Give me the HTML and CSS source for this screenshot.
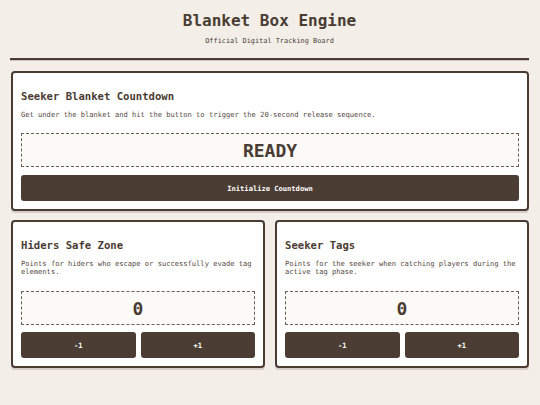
FILE: index.html
```html
<!DOCTYPE html>
<html lang="en">
<head>
    <meta charset="UTF-8">
    <meta name="viewport" content="width=device-width, initial-scale=1.0">
    <title>Blanket Box Engine</title>
    <link rel="stylesheet" href="styles.css">
</head>
<body>
    <div class="header">
        <h1>Blanket Box Engine</h1>
        <p class="subtitle">Official Digital Tracking Board</p>
    </div>

    <div class="card">
        <h2>Seeker Blanket Countdown</h2>
        <p class="desc">Get under the blanket and hit the button to trigger the 20-second release sequence.</p>
        <div class="display" id="timer">READY</div>
        <button class="btn" id="start-button">Initialize Countdown</button>
    </div>

    <div class="row">
        <div class="card">
            <h2>Hiders Safe Zone</h2>
            <p class="desc">Points for hiders who escape or successfully evade tag elements.</p>
            <div class="display" id="hiders">0</div>
            <div class="buttons">
                <button class="btn" onclick="changeScore('hiders', -1)">-1</button>
                <button class="btn" onclick="changeScore('hiders', 1)">+1</button>
            </div>
        </div>
        <div class="card">
            <h2>Seeker Tags</h2>
            <p class="desc">Points for the seeker when catching players during the active tag phase.</p>
            <div class="display" id="seeker">0</div>
            <div class="buttons">
                <button class="btn" onclick="changeScore('seeker', -1)">-1</button>
                <button class="btn" onclick="changeScore('seeker', 1)">+1</button>
            </div>
        </div>
    </div>

    <script>
        const scores = { hiders: 0, seeker: 0 };

        function changeScore(id, delta) {
            scores[id] = Math.max(0, scores[id] + delta);
            document.getElementById(id).textContent = scores[id];
        }

        let timerId = null;
        document.getElementById("start-button").onclick = () => {
            if (timerId) return;
            let left = 20;
            const box = document.getElementById("timer");
            box.textContent = left;
            timerId = setInterval(() => {
                left--;
                box.textContent = left > 0 ? left : "GO!";
                if (left <= 0) {
                    clearInterval(timerId);
                    timerId = null;
                }
            }, 1000);
        };
    </script>
</body>
</html>
```

FILE: styles.css
```css
html, body {
    margin: 0;
    font-family: "DejaVu Sans Mono", monospace;
    color: #4a3c33;
}

body {
    background-color: #f3eee8;
    padding: 11px 11px 10px 11px;
}

.header {
    text-align: center;
    padding-bottom: 12px;
    border-bottom: 2px solid #4a3c33;
    box-shadow: 0 1px 0 #c9c0b8;
    margin: 0 0 11px -1px;
}

.header h1 {
    margin: 0;
    font-size: 16px;
    line-height: 19px;
}

.subtitle {
    margin: 7px 0 0 0;
    font-size: 6.9px;
    line-height: 9px;
}

.card {
    background: white;
    border: 2px solid #4a3c33;
    border-radius: 4px;
    padding: 8px;
    box-shadow: 0 2px 0 #d6cec6;
    display: flex;
    flex-direction: column;
}

.card h2 {
    margin: 9px 0 9px 0;
    font-size: 10.6px;
    line-height: 12px;
}

.desc {
    margin: 0 0 14px 0;
    font-size: 7.1px;
    line-height: 8px;
    color: #55483f;
}

.row .desc {
    margin-bottom: 15px;
}

.display {
    height: 32px;
    border: 1px dashed #6b5e55;
    background-color: #fcfaf6;
    display: flex;
    justify-content: center;
    align-items: center;
    font-size: 18px;
    font-weight: bold;
    margin-bottom: 8px;
}

.row .display {
    margin-bottom: 7px;
}

.btn {
    height: 26px;
    border: none;
    border-radius: 3px;
    background-color: #4b3d33;
    color: white;
    font-family: "DejaVu Sans Mono", monospace;
    font-size: 7.1px;
    font-weight: bold;
    cursor: pointer;
}

.btn:hover {
    background-color: #5e4d41;
}

.row {
    display: flex;
    gap: 10px;
    margin-top: 9px;
}

.row .card {
    flex: 1;
}

.buttons {
    display: flex;
    gap: 5px;
}

.buttons .btn {
    flex: 1;
}
```
